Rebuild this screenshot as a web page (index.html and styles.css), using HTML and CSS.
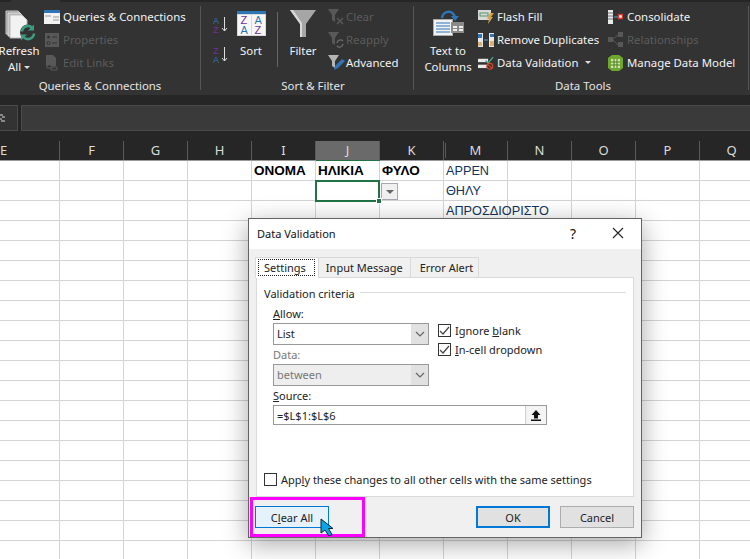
FILE: index.html
```html
<!DOCTYPE html>
<html lang="en">
<head>
    <meta charset="UTF-8">
    <meta name="viewport" content="width=device-width, initial-scale=1.0">
    <title>Data Validation</title>
    <link rel="stylesheet" href="styles.css">
</head>
<body>
<div class="page">

    <!-- Ribbon -->
    <div class="tabs-strip"><i></i></div>
    <div class="ribbon">
        <div class="group g-queries">
            <div class="tools">
                <div class="big w-refresh">
                    <svg class="big-icon" width="38" height="31" viewBox="0 0 38 31">
                        <path d="M6 1h12l3 3v20H6z" fill="#8f8f8f" stroke="#cfcfcf"/>
                        <path d="M8 3h12l3 3v20H8z" fill="#b5b5b5" stroke="#e5e5e5"/>
                        <path d="M10 5h12l5 5v18H10z" fill="#f2f2f2" stroke="#bbb"/>
                        <g transform="translate(0 -1.500)">
                            <circle cx="28" cy="24" r="8" fill="#333"/>
                            <path d="M22 23a6 6 0 0 1 10.500-3.500M34 25a6 6 0 0 1-10.500 3.500" fill="none" stroke="#3f9b80" stroke-width="2.600"/>
                            <path d="M34 16v6h-6zM21 32v-6h6z" fill="#3f9b80"/>
                        </g>
                    </svg>
                    <span>Refresh</span>
                    <span>All <i class="caret"></i></span>
                </div>
                <div class="col col-queries">
                    <div class="row">
                        <svg class="ico" width="16" height="14" viewBox="0 0 16 14"><rect width="16" height="14" fill="#f2f2f2"/><rect width="16" height="3" fill="#2e75b6"/><path d="M9 7h6M9 10h6M1 6h6" stroke="#999"/></svg>
                        <span>Queries &amp; Connections</span>
                    </div>
                    <div class="row off">
                        <svg class="ico" width="16" height="14" viewBox="0 0 16 14"><rect x="1" width="14" height="14" fill="#585858"/><circle cx="4.500" cy="4" r="1.500" fill="#333"/><circle cx="4.500" cy="10" r="1.500" fill="none" stroke="#333"/><path d="M8 4h5M8 10h5" stroke="#333"/></svg>
                        <span>Properties</span>
                    </div>
                    <div class="row off">
                        <svg class="ico" width="16" height="16" viewBox="0 0 16 16"><path d="M2 0h7l3 3v8H2z" fill="#585858"/><path d="M3 10h5v3H3zM7 12h6v3H7z" fill="#333" stroke="#585858"/></svg>
                        <span>Edit Links</span>
                    </div>
                </div>
            </div>
            <div class="caption">Queries &amp; Connections</div>
        </div>

        <div class="group g-sort">
            <div class="tools">
                <div class="az">
                    <svg width="16" height="18" viewBox="0 0 16 18"><text x="0" y="8" class="l-blue">A</text><text x="0" y="17" class="l-purple">Z</text><path d="M11.500 1v14M9 12l2.500 3 2.500-3" fill="none" stroke="#ddd"/></svg>
                    <svg width="16" height="18" viewBox="0 0 16 18"><text x="0" y="8" class="l-purple">Z</text><text x="0" y="17" class="l-blue">A</text><path d="M11.500 1v14M9 12l2.500 3 2.500-3" fill="none" stroke="#ddd"/></svg>
                </div>
                <div class="big w-sort">
                    <svg class="big-icon" width="29" height="30" viewBox="0 0 29 30">
                        <rect y="0" width="29" height="25" fill="#d9d9d9"/>
                        <rect y="0" width="29" height="3" fill="#2e75b6"/>
                        <rect x="1" y="4" width="13" height="20" fill="#f7f7f7"/>
                        <rect x="15" y="4" width="13" height="20" fill="#f7f7f7"/>
                        <text x="3.500" y="13" class="l-purple big-l">Z</text><text x="3.500" y="23" class="l-blue big-l">A</text>
                        <text x="17.500" y="13" class="l-blue big-l">A</text><text x="17.500" y="23" class="l-purple big-l">Z</text>
                    </svg>
                    <span>Sort</span>
                </div>
                <div class="vsep"></div>
                <div class="big w-filter">
                    <svg class="big-icon" width="28" height="31" viewBox="0 0 28 31">
                        <path d="M1 0h26L17 14v13h-6V14z" fill="#a6a6a6"/>
                        <path d="M1 0l10 14v13h2V13L4 0z" fill="#d9d9d9"/>
                    </svg>
                    <span>Filter</span>
                </div>
                <div class="col col-filter">
                    <div class="row off">
                        <svg class="ico" width="18" height="16" viewBox="0 0 18 16"><path d="M0 0h11L7 6v7L4 11V6z" fill="#585858"/><path d="M9 9l6 6M15 9l-6 6" stroke="#585858" stroke-width="1.500"/></svg>
                        <span>Clear</span>
                    </div>
                    <div class="row off">
                        <svg class="ico" width="18" height="16" viewBox="0 0 18 16"><path d="M0 0h11L7 6v7L4 11V6z" fill="#585858"/><path d="M9 11a3.500 3.500 0 0 1 6-2M15 12a3.500 3.500 0 0 1-6 2" fill="none" stroke="#6a6a6a" stroke-width="1.400"/></svg>
                        <span>Reapply</span>
                    </div>
                    <div class="row">
                        <svg class="ico" width="18" height="16" viewBox="0 0 18 16"><path d="M0 0h11L7 6v7L4 11V6z" fill="#b5b5b5"/><path d="M6 15l1-4 7-7 3 2-7 7z" fill="#2e75b6"/></svg>
                        <span>Advanced</span>
                    </div>
                </div>
            </div>
            <div class="caption">Sort &amp; Filter</div>
        </div>

        <div class="group g-data">
            <div class="tools">
                <div class="big w-text">
                    <svg class="big-icon" width="31" height="27" viewBox="0 0 31 27">
                        <path d="M9 8C10 1 19-1 22 7" fill="none" stroke="#2e75b6" stroke-width="2.500"/>
                        <path d="M18 6h8l-4 5z" fill="#2e75b6"/>
                        <rect x="0.500" y="9.500" width="19" height="16" fill="#f2f2f2" stroke="#aaa"/>
                        <path d="M3 13h14M3 16h14M3 19h14M3 22h14" stroke="#2e75b6"/>
                        <rect x="18" y="12" width="13" height="11" fill="#8a8a8a"/>
                        <path d="M20 16h4v2h-4zM26 16h4v2h-4zM20 19h4v2h-4zM26 19h4v2h-4z" fill="#eee"/>
                    </svg>
                    <span>Text to</span>
                    <span>Columns</span>
                </div>
                <div class="col col-tools">
                    <div class="row">
                        <svg class="ico" width="16" height="14" viewBox="0 0 16 14"><rect width="13" height="10" fill="#d9d9d9"/><rect x="2" y="3" width="8" height="3" fill="none" stroke="#4e9a6b"/><path d="M12 3h4l-3 4h2l-5 7 1-5H9z" fill="#d8a24a"/></svg>
                        <span>Flash Fill</span>
                    </div>
                    <div class="row">
                        <svg class="ico" width="16" height="14" viewBox="0 0 16 14"><rect width="5" height="14" fill="#e9e9e9"/><rect y="1" width="4" height="4" fill="#2e75b6"/><rect y="9" width="4" height="4" fill="#d8b27a"/><rect x="11" width="5" height="14" fill="#e9e9e9"/><rect x="12" y="1" width="4" height="3" fill="#2e75b6"/><rect x="12" y="8" width="4" height="5" fill="#d8b27a"/><path d="M6 7h4" stroke="#5b9bd5"/></svg>
                        <span>Remove Duplicates</span>
                    </div>
                    <div class="row">
                        <svg class="ico" width="16" height="14" viewBox="0 0 19 16"><rect y="3" width="12" height="4" fill="#e9e9e9"/><rect y="10" width="12" height="4" fill="#e9e9e9"/><path d="M9 5l3 3 6-7" fill="none" stroke="#4fa58c" stroke-width="1.600"/><circle cx="14" cy="12" r="3.500" fill="#333" stroke="#d9482b" stroke-width="1.300"/><path d="M11.500 9.500l5 5" stroke="#d9482b" stroke-width="1.300"/></svg>
                        <span class="dv-label">Data Validation</span>
                        <i class="caret dv-caret"></i>
                    </div>
                </div>
                <div class="col col-model">
                    <div class="row">
                        <svg class="ico" width="15" height="14" viewBox="0 0 15 14"><rect width="5" height="14" fill="#e9e9e9"/><path d="M0 3h5M0 6h5M0 9h5" stroke="#777"/><path d="M6 7h4" stroke="#5b9bd5"/><rect x="10.500" y="4.500" width="4" height="4" fill="#fff" stroke="#d9382b" stroke-width="1.500"/></svg>
                        <span>Consolidate</span>
                    </div>
                    <div class="row off">
                        <svg class="ico" width="15" height="16" viewBox="0 0 15 16"><rect y="5" width="5" height="5" fill="#585858"/><rect x="10" y="0" width="5" height="5" fill="#585858"/><rect x="10" y="10" width="5" height="5" fill="#585858"/><path d="M5 7l5-4M5 8l5 5" stroke="#585858"/></svg>
                        <span>Relationships</span>
                    </div>
                    <div class="row">
                        <svg class="ico" width="15" height="16" viewBox="0 0 15 16"><path d="M0 3l4-3h7l4 3v10l-4 3H4l-4-3z" fill="#6fa82e"/><rect x="3" y="4" width="9" height="9" fill="#cfe5a8"/><path d="M6 4v9M9 4v9M3 7h9M3 10h9" stroke="#4d7d1e"/></svg>
                        <span>Manage Data Model</span>
                    </div>
                </div>
            </div>
            <div class="caption">Data Tools</div>
        </div>
    </div>

    <!-- Formula bar -->
    <div class="formula-bar">
        <div class="fx-box">
            <svg class="fx-mark" width="6" height="8" viewBox="0 0 6 8"><path d="M0 1h3M2 3h3M0 5h2M1 7h4" stroke="#ddd"/></svg>
        </div>
        <div class="fx-input"></div>
    </div>

    <!-- Column headers -->
    <div class="col-heads">
        <div class="head">E</div>
        <div class="head">F</div>
        <div class="head">G</div>
        <div class="head">H</div>
        <div class="head">I</div>
        <div class="head selected">J</div>
        <div class="head hidden-next">K</div>
        <div class="head">M</div>
        <div class="head">N</div>
        <div class="head">O</div>
        <div class="head">P</div>
        <div class="head">Q</div>
    </div>

    <!-- Sheet -->
    <div class="sheet">
        <div class="cell bold c-i r-1">ΟΝΟΜΑ</div>
        <div class="cell bold sel-col c-j r-1">ΗΛΙΚΙΑ</div>
        <div class="cell bold c-k r-1">ΦΥΛΟ</div>
        <div class="cell list c-m r-1">ΑΡΡΕΝ</div>
        <div class="cell list c-m r-2">ΘΗΛΥ</div>
        <div class="cell list c-m r-3">ΑΠΡΟΣΔΙΟΡΙΣΤΟ</div>
        <div class="active c-j r-2"><i class="handle"></i></div>
        <div class="cell-drop c-k r-2"><i class="caret grey"></i></div>
    </div>

    <!-- Dialog -->
    <div class="dialog">
        <div class="dlg-title">
            <span>Data Validation</span>
            <span class="dlg-help">?</span>
            <svg class="dlg-close" width="12" height="12" viewBox="0 0 12 12"><path d="M1 1l10 10M11 1L1 11" stroke="#222" stroke-width="1.100"/></svg>
        </div>
        <div class="dlg-body">
            <div class="dlg-tabs">
                <div class="tab active-tab"><span class="dotted">Settings</span></div>
                <div class="tab">Input Message</div>
                <div class="tab">Error Alert</div>
            </div>
            <div class="panel">
                <div class="legend"><span>Validation criteria</span><i></i></div>
                <div class="form">
                    <div class="form-top">
                        <div class="form-left">
                            <label class="lbl"><u>A</u>llow:</label>
                            <div class="select"><span>List</span><b class="chev"><svg width="10" height="6" viewBox="0 0 10 6"><path d="M1 1l4 4 4-4" fill="none" stroke="#666" stroke-width="1.200"/></svg></b></div>
                            <label class="lbl muted">Data:</label>
                            <div class="select disabled"><span>between</span><b class="chev"><svg width="10" height="6" viewBox="0 0 10 6"><path d="M1 1l4 4 4-4" fill="none" stroke="#666" stroke-width="1.200"/></svg></b></div>
                        </div>
                        <div class="form-right">
                            <div class="check"><i class="box"><svg width="11" height="11" viewBox="0 0 11 11"><path d="M1 6l3 3 6-7" fill="none" stroke="#444" stroke-width="1.200"/></svg></i><span>Ignore <u>b</u>lank</span></div>
                            <div class="check"><i class="box"><svg width="11" height="11" viewBox="0 0 11 11"><path d="M1 6l3 3 6-7" fill="none" stroke="#444" stroke-width="1.200"/></svg></i><span><u>I</u>n-cell dropdown</span></div>
                        </div>
                    </div>
                    <label class="lbl"><u>S</u>ource:</label>
                    <div class="source">
                        <span>=$L$1:$L$6</span>
                        <b class="pick"><svg width="10" height="11" viewBox="0 0 10 11"><path d="M5 0l4.500 5H7v3.500H3V5H.5z" fill="#111"/><rect y="9.500" width="10" height="1.500" fill="#111"/></svg></b>
                    </div>
                </div>
                <div class="apply"><i class="box"></i><span>App<u>l</u>y these changes to all other cells with the same settings</span></div>
            </div>
            <div class="dlg-foot">
                <button class="btn hover">C<u>l</u>ear All</button>
                <div class="foot-right">
                    <button class="btn primary">OK</button>
                    <button class="btn">Cancel</button>
                </div>
            </div>
        </div>
    </div>

    <!-- Callout and mouse pointer on top of the dialog -->
    <div class="callout"></div>
    <svg class="pointer" width="14" height="19" viewBox="0 0 14 19"><path d="M1 1v14l4-3 4 6 3-1.500-3.500-6H13z" fill="#0aa5e6" stroke="#123" stroke-width="1"/></svg>

</div>
</body>
</html>
```

FILE: styles.css
```css
* {
    box-sizing: border-box;
}

body {
    margin: 0;
    background: #fff;
}

i {
    font-style: normal;
}

.page {
    position: relative;
    width: 750px;
    height: 559px;
    overflow: hidden;
    font-family: "Noto Sans", sans-serif;
    font-size: 11.400px;
    background: #262626;
}

/* Ribbon */
.tabs-strip {
    height: 2px;
    padding-left: 11px;
    background: #262626;
}

.tabs-strip i {
    display: block;
    width: 49px;
    height: 2px;
    background: #333;
}

.ribbon {
    display: flex;
    height: 93px;
    padding-top: 4px;
    background: #333;
    color: #f4f4f4;
}

.group {
    height: 84px;
    border-right: 1px solid #555;
    flex: none;
}

.g-queries {
    width: 201px;
}

.g-sort {
    width: 213px;
    padding-left: 12px;
}

.g-data {
    width: 335px;
    padding-left: 4px;
}

.tools {
    display: flex;
    height: 74px;
}

.caption {
    line-height: 12px;
    text-align: center;
    color: #e6e6e6;
}

.big {
    display: flex;
    flex-direction: column;
    align-items: center;
    flex: none;
    padding-top: 4px;
    line-height: 16px;
    white-space: nowrap;
}

.big-icon {
    display: block;
    margin-bottom: 2px;
}

.w-refresh {
    width: 38px;
}

.w-sort {
    width: 44px;
    padding-top: 5px;
}

.w-filter {
    width: 50px;
}

.w-text {
    width: 60px;
}

.w-text .big-icon {
    margin-bottom: 6px;
}

.col {
    flex: none;
    margin-top: -1px;
}

.col-queries {
    margin-left: 6px;
}

.col-tools {
    width: 130px;
}

.row {
    display: flex;
    align-items: center;
    height: 23px;
    white-space: nowrap;
}

.off {
    color: #5c5c5c;
}

.ico {
    flex: none;
}

.col-queries .ico,
.col-tools .ico {
    margin-right: 3px;
}

.col-model .ico {
    margin-right: 4px;
}

.caret {
    display: inline-block;
    width: 0;
    height: 0;
    margin-bottom: 2px;
    border-left: 3px solid transparent;
    border-right: 3px solid transparent;
    border-top: 3px solid #ddd;
}

.dv-caret {
    margin: 0 0 0 7px;
}

.az {
    display: flex;
    flex-direction: column;
    gap: 12px;
    width: 16px;
    padding-top: 10px;
    flex: none;
}

.az svg {
    display: block;
}

.l-blue,
.l-purple {
    font-family: "Liberation Sans", sans-serif;
    font-size: 9px;
}

.l-blue.big-l,
.l-purple.big-l {
    font-size: 11px;
}

.l-blue {
    fill: #2e75b6;
}

.l-purple {
    fill: #7030a0;
}

.vsep {
    width: 1px;
    height: 55px;
    margin: 6px 0 0 4px;
    background: #666;
    flex: none;
}

/* Formula bar */
.formula-bar {
    display: flex;
    gap: 3px;
    height: 26px;
    margin-top: 10px;
}

.fx-box {
    width: 18px;
    border: 1px solid #4a4a4a;
    border-left: none;
    background: #333;
}

.fx-input {
    flex: 1;
    border: 1px solid #4a4a4a;
    border-right: none;
    background: #3a3a3a;
}

.fx-mark {
    display: block;
    margin-top: 8px;
}

/* Column headers */
.col-heads {
    display: grid;
    grid-template-columns: 112px repeat(11, 64px);
    height: 19px;
    margin: 10px 0 0 -52px;
    color: #dcdcdc;
    font-size: 13px;
}

.head {
    border-right: 1px solid #5a5a5a;
    line-height: 19px;
    text-align: center;
}

.head.selected {
    background: #6a6a6a;
}

.head.hidden-next {
    box-shadow: 3px 0 0 -2px #262626, 4px 0 0 -2px #5a5a5a;
}

/* Sheet */
.sheet {
    display: grid;
    grid-template-columns: 112px repeat(11, 64px);
    grid-auto-rows: 20px;
    height: 400px;
    margin-left: -52px;
    background-color: #fff;
    background-image:
        linear-gradient(to bottom, transparent 19px, #d4d4d4 19px),
        linear-gradient(to right, transparent 63px, #d4d4d4 63px);
    background-size: 64px 20px, 64px 20px;
    background-position: 0 0, 48px 0;
    border-top: 1px solid #9a9a9a;
    color: #000;
    font-family: "Liberation Sans", sans-serif;
    font-size: 12.700px;
}

.cell {
    padding-left: 2px;
    line-height: 20px;
    white-space: nowrap;
}

.bold {
    font-weight: bold;
    font-size: 13.500px;
}

.sel-col {
    box-shadow: 0 -1px 0 #217346;
}

.list {
    color: #12335c;
}

.c-i { grid-column: 5; }
.c-j { grid-column: 6; }
.c-k { grid-column: 7; }
.c-m { grid-column: 8; }
.r-1 { grid-row: 1; }
.r-2 { grid-row: 2; }
.r-3 { grid-row: 3; }

.active {
    position: relative;
    margin: -1px 0 -1px -1px;
    border: 2px solid #217346;
}

.handle {
    position: absolute;
    right: -4px;
    bottom: -4px;
    width: 6px;
    height: 6px;
    background: #217346;
    border: 1px solid #fff;
}

.cell-drop {
    display: flex;
    align-items: center;
    justify-content: center;
    width: 17px;
    height: 17px;
    margin: 2px 0 0 1px;
    border: 1px solid #a8a8b0;
    background: #f0f0f0;
}

.caret.grey {
    margin: 0;
    border-left-width: 4px;
    border-right-width: 4px;
    border-top: 4px solid #666;
}

/* Dialog */
.dialog {
    position: absolute;
    left: 248px;
    top: 218px;
    width: 394px;
    height: 320px;
    border: 1px solid #646464;
    background: #f0f0f0;
    box-shadow: 0 6px 24px rgba(0, 0, 0, 0.35);
    color: #222;
    font-size: 11px;
    display: flex;
    flex-direction: column;
}

.dlg-title {
    display: flex;
    align-items: center;
    flex: none;
    height: 30px;
    padding: 0 0 2px 8px;
    background: #fff;
    color: #111;
}

.dlg-help {
    margin-left: auto;
    font-size: 14px;
}

.dlg-close {
    margin: 0 17px 0 36px;
}

.dlg-body {
    flex: 1;
    padding: 8px 7px 0 7px;
}

.dlg-tabs {
    display: flex;
    height: 20px;
    align-items: flex-end;
}

.tab {
    height: 20px;
    padding: 0 7px;
    line-height: 20px;
    border: 1px solid #d9d9d9;
    border-bottom: none;
    border-left: none;
    background: #f0f0f0;
    white-space: nowrap;
}

.tab:last-child {
    padding: 0 5px 0 9px;
}

.active-tab {
    height: 21px;
    margin: 0 0 -1px -1px;
    padding: 2px 4px 0 3px;
    border-left: 1px solid #d9d9d9;
    background: #fff;
    position: relative;
}

.dotted {
    display: block;
    padding: 0 8px 0 5px;
    line-height: 15px;
    outline: 1px dotted #222;
}

.panel {
    display: flex;
    flex-direction: column;
    height: 220px;
    padding: 8px 7px 0;
    border: 1px solid #d9d9d9;
    background: #fff;
}

.legend {
    display: flex;
    align-items: center;
    height: 14px;
}

.legend i {
    flex: 1;
    height: 1px;
    margin: 0 0 1px 5px;
    background: #dcdcdc;
}

.form {
    padding: 7px 0 0 9px;
}

.form-top {
    display: flex;
}

.form-left {
    width: 156px;
}

.form-right {
    padding: 14px 0 0 9px;
}

.lbl {
    display: block;
    height: 16px;
    line-height: 14px;
}

.muted {
    color: #777;
}

.select {
    display: flex;
    align-items: center;
    justify-content: space-between;
    height: 22px;
    margin-bottom: 3px;
    padding: 0 0 2px 3px;
    border: 1px solid #999;
    background: #fff;
}

.select.disabled {
    background: #eee;
    color: #777;
}

.chev {
    display: flex;
    align-items: center;
    justify-content: center;
    width: 17px;
    height: 20px;
    margin-bottom: -2px;
    background: #e1e1e1;
}

.check {
    display: flex;
    align-items: center;
    height: 19px;
}

.box {
    display: flex;
    align-items: center;
    justify-content: center;
    width: 13px;
    height: 13px;
    margin-right: 4px;
    border: 1px solid #333;
    background: #fff;
    flex: none;
}

.source {
    display: flex;
    align-items: center;
    justify-content: space-between;
    width: 274px;
    height: 20px;
    padding-left: 3px;
    border: 1px solid #999;
}

.pick {
    display: flex;
    align-items: center;
    justify-content: center;
    width: 21px;
    height: 18px;
    background: #f4f4f4;
    border-left: 1px solid #cfcfcf;
}

.apply {
    display: flex;
    align-items: center;
    height: 14px;
    margin-top: auto;
    margin-bottom: 10px;
}

.dlg-foot {
    display: flex;
    justify-content: space-between;
    margin: 9px 0 0 -1px;
}

.foot-right {
    display: flex;
    gap: 10px;
}

.btn {
    width: 74px;
    height: 22px;
    padding: 0;
    border: 1px solid #adadad;
    background: #e1e1e1;
    color: #222;
    font-family: inherit;
    font-size: 11px;
}

.btn.hover {
    border-color: #0078d7;
    background: #e5f1fb;
}

.btn.primary {
    border: 2px solid #0078d7;
}

/* Overlays */
.callout {
    position: absolute;
    left: 250px;
    top: 497px;
    width: 115px;
    height: 40px;
    border: 3px solid #ff00ff;
}

.pointer {
    position: absolute;
    left: 320px;
    top: 518px;
}
```
